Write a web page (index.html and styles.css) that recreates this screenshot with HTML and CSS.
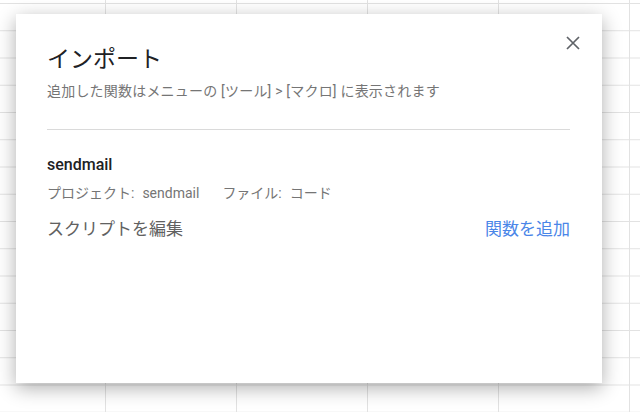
FILE: index.html
```html
<!DOCTYPE html>
<html lang="ja">
<head>
<meta charset="utf-8">
<link rel="stylesheet" href="styles.css">
</head>
<body>
<div class="sheet"></div>
<div class="dialog" role="dialog">
  <button class="close" aria-label="閉じる">
    <svg width="14" height="14" viewBox="0 0 14 14"><path d="M1 1L13 13M13 1L1 13" stroke="#5f6368" stroke-width="1.7" fill="none"/></svg>
  </button>
  <h1 class="title">インポート</h1>
  <p class="subtitle">追加した関数はメニューの [ツール] &gt; [マクロ] に表示されます</p>
  <hr class="divider">
  <div class="item">
    <div class="name">sendmail</div>
    <div class="meta">
      <span>プロジェクト:<span class="val">sendmail</span></span>
      <span>ファイル:<span class="val">コード</span></span>
    </div>
    <div class="actions">
      <span class="edit">スクリプトを編集</span>
      <span class="add">関数を追加</span>
    </div>
  </div>
</div>
</body>
</html>
```
FILE: styles.css
```css
html, body {
  margin: 0;
  padding: 0;
  width: 640px;
  height: 412px;
  overflow: hidden;
  background: #fff;
  font-family: "Roboto", "Noto Sans CJK JP", sans-serif;
}
.sheet {
  width: 640px;
  height: 412px;
  background-image:
    linear-gradient(to right, #e2e2e2 1px, transparent 1px),
    linear-gradient(to bottom, #e2e2e2 1px, transparent 1px);
  background-size: 131px 100%, 100% 27.25px;
  background-position: 105px 0, 0 3px;
}
.dialog {
  position: absolute;
  left: 16px;
  top: 14px;
  width: 586px;
  height: 369px;
  box-sizing: border-box;
  background: #fff;
  padding: 32px 32px 0 31px;
  box-shadow: 0 5px 18px rgba(0,0,0,0.32);
}
.close {
  position: absolute;
  right: 22px;
  top: 22px;
  width: 14px;
  height: 14px;
  padding: 0;
  border: 0;
  background: none;
  display: flex;
}
.title {
  margin: 0;
  font-size: 23px;
  line-height: 28px;
  font-weight: 400;
  color: #202124;
}
.subtitle {
  margin: 7px 0 0;
  font-size: 14px;
  line-height: 20px;
  letter-spacing: 0.2px;
  color: #757575;
}
.divider {
  margin: 28px 0 0;
  border: 0;
  height: 1px;
  background: #dadada;
}
.item {
  display: flex;
  flex-direction: column;
}
.name {
  margin-top: 25px;
  font-size: 16px;
  line-height: 20px;
  font-weight: 500;
  color: #202124;
}
.meta {
  margin-top: 8px;
  font-size: 14px;
  line-height: 20px;
  color: #757575;
  display: flex;
  gap: 23px;
}
.val {
  margin-left: 8px;
}
.actions {
  margin-top: 14px;
  display: flex;
  justify-content: space-between;
  font-size: 17px;
  line-height: 24px;
}
.edit { color: #616161; }
.add { color: #4a86e8; }
```
